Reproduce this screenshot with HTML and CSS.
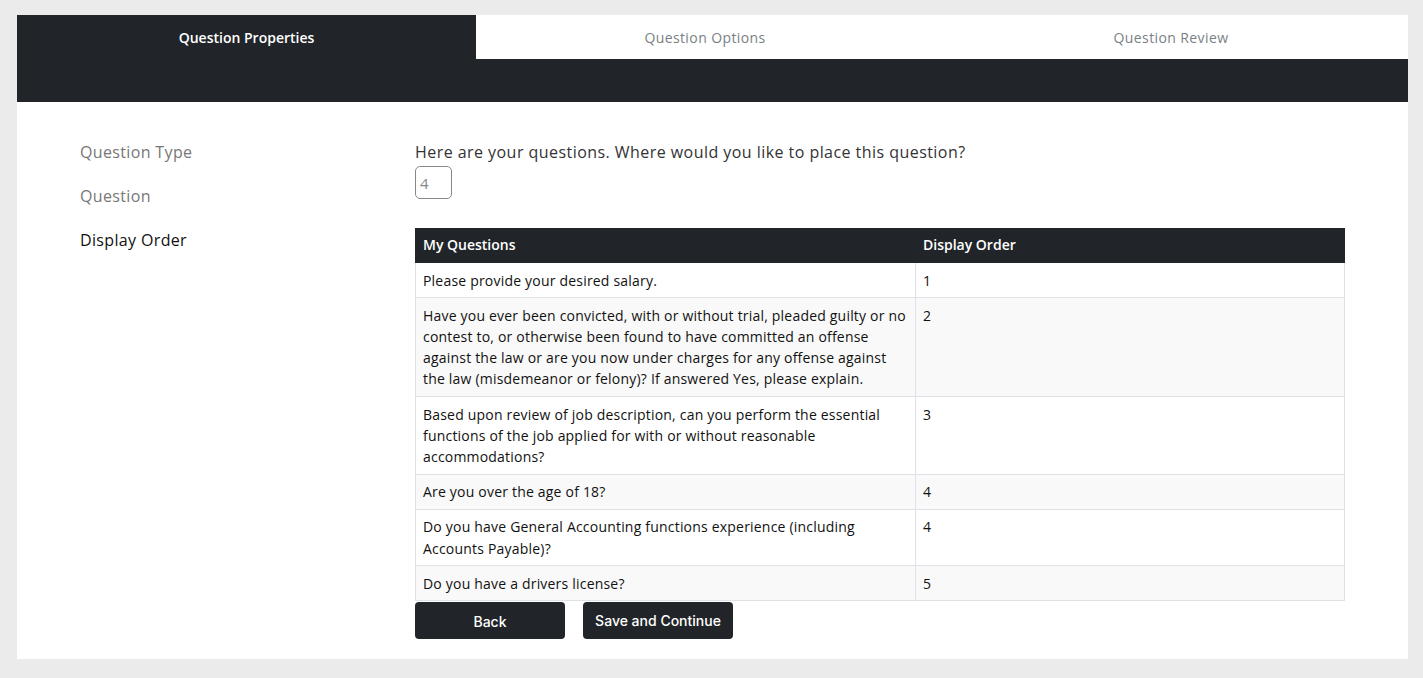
FILE: index.html
```html
<!DOCTYPE html>
<html lang="en">
<head>
    <meta charset="UTF-8">
    <meta name="viewport" content="width=device-width, initial-scale=1.0">
    <title>Question Properties</title>
    <link rel="stylesheet" href="styles.css">
</head>
<body>
    <div class="wizard">
        <div class="wizard-header">
            <div class="tabs">
                <div class="tab active">Question Properties</div>
                <div class="tab">Question Options</div>
                <div class="tab">Question Review</div>
            </div>
        </div>

        <div class="wizard-body">
            <ul class="steps">
                <li class="step">Question Type</li>
                <li class="step">Question</li>
                <li class="step current">Display Order</li>
            </ul>

            <div class="panel">
                <p class="prompt">Here are your questions. Where would you like to place this question?</p>
                <input class="order-input" type="text" value="4">

                <table class="questions">
                    <thead>
                        <tr>
                            <th class="col-question">My Questions</th>
                            <th>Display Order</th>
                        </tr>
                    </thead>
                    <tbody>
                        <tr>
                            <td>Please provide your desired salary.</td>
                            <td>1</td>
                        </tr>
                        <tr>
                            <td>Have you ever been convicted, with or without trial, pleaded guilty or no contest to, or otherwise been found to have committed an offense against the law or are you now under charges for any offense against the law (misdemeanor or felony)? If answered Yes, please explain.</td>
                            <td>2</td>
                        </tr>
                        <tr>
                            <td>Based upon review of job description, can you perform the essential functions of the job applied for with or without reasonable accommodations?</td>
                            <td>3</td>
                        </tr>
                        <tr>
                            <td>Are you over the age of 18?</td>
                            <td>4</td>
                        </tr>
                        <tr>
                            <td>Do you have General Accounting functions experience (including Accounts Payable)?</td>
                            <td>4</td>
                        </tr>
                        <tr>
                            <td>Do you have a drivers license?</td>
                            <td>5</td>
                        </tr>
                    </tbody>
                </table>

                <div class="actions">
                    <button class="btn btn-back">Back</button>
                    <button class="btn btn-save">Save and Continue</button>
                </div>
            </div>
        </div>
    </div>
</body>
</html>
```

FILE: styles.css
```css
:root {
    --dark: #212529;
    --muted: #777777;
    --border: #dee2e6;
    --stripe: #f9f9f9;
}

* {
    box-sizing: border-box;
}

body {
    margin: 0;
    padding: 15px 15px 19px 17px;
    background: #ebebeb;
    font-family: 'Open Sans', 'Liberation Sans', sans-serif;
    color: #212529;
}

.wizard {
    background: white;
}

/* header with tabs */
.wizard-header {
    background: var(--dark);
    padding-bottom: 43px;
}

.tabs {
    display: grid;
    grid-template-columns: 459px 458px 1fr;
    background: white;
}

.tab {
    height: 44px;
    display: flex;
    align-items: center;
    justify-content: center;
    font-size: 14px;
    color: #7a7f85;
    letter-spacing: 0.4px;
}

.tab.active {
    background: var(--dark);
    color: white;
    font-weight: 600;
    letter-spacing: 0;
}

/* body */
.wizard-body {
    display: grid;
    grid-template-columns: 335px 1fr;
    padding: 38px 63px 20px;
}

.steps {
    list-style: none;
    margin: 0;
    padding: 0;
    display: flex;
    flex-direction: column;
    gap: 20px;
}

.step {
    font-size: 16px;
    line-height: 24px;
    color: var(--muted);
    letter-spacing: 0.35px;
}

.step.current {
    color: #111;
}

.prompt {
    margin: 0 0 2px;
    font-size: 16px;
    line-height: 24px;
    color: #333;
    letter-spacing: 0.45px;
}

.order-input {
    display: block;
    width: 37px;
    height: 33px;
    padding: 0 4px;
    border: 1px solid #888;
    border-radius: 5px;
    font-family: inherit;
    font-size: 15px;
    color: #888;
    margin-bottom: 29px;
}

.questions {
    width: 930px;
    border-collapse: collapse;
    font-size: 14px;
    line-height: 21.2px;
    letter-spacing: 0.2px;
}

.questions th {
    background: var(--dark);
    color: white;
    text-align: left;
    font-weight: 600;
    letter-spacing: 0;
    line-height: 21px;
    padding: 5px 7px 7px;
    border: 1px solid var(--dark);
}

.questions .col-question {
    width: 500px;
}

.questions td {
    padding: 6.5px 7px;
    border: 1px solid var(--border);
    vertical-align: top;
    color: #111;
}

.questions tbody tr:nth-child(even) {
    background: var(--stripe);
}

.actions {
    display: flex;
    gap: 18px;
    margin-top: 1px;
}

.btn {
    width: 150px;
    height: 37px;
    border: none;
    border-radius: 4px;
    background: var(--dark);
    color: white;
    font-family: Inter, Roboto, 'Liberation Sans', sans-serif;
    font-size: 14px;
    font-weight: 500;
    cursor: pointer;
}

.btn-back {
    padding-top: 3px;
}

.btn-save {
    padding-bottom: 1px;
}
```
